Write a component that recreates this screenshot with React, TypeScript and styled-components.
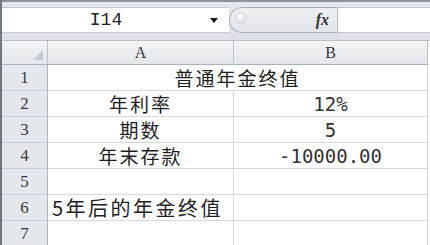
import React from "react";
import styled, { createGlobalStyle } from "styled-components";

const GlobalStyle = createGlobalStyle`
  html, body {
    margin: 0;
    padding: 0;
    background: #ffffff;
  }
`;

const Sheet = styled.div`
  width: 430px;
  height: 245px;
  overflow: hidden;
  background: #ffffff;
  border-left: 2px solid #6f7780;
  box-sizing: border-box;
`;

const FormulaBar = styled.div`
  height: 40px;
  box-sizing: border-box;
  border-top: 2px solid #8c9299;
  background: linear-gradient(#e4e7eb, #dde1e6);
  padding: 5px 0 7px 0;
  display: flex;
  align-items: stretch;
`;

const NameBox = styled.div`
  width: 227px;
  background: #ffffff;
  border-top: 1px solid #c3c8ce;
  border-bottom: 1px solid #c3c8ce;
  display: flex;
  align-items: center;
  font-family: "Liberation Mono", monospace;
  font-size: 18px;
  color: #222;
`;

const NameText = styled.span`
  flex: 1;
  text-align: center;
`;

const DropArrow = styled.span`
  width: 0;
  height: 0;
  margin-right: 11px;
  border-left: 4px solid transparent;
  border-right: 4px solid transparent;
  border-top: 5px solid #1a1a1a;
`;

const FxPill = styled.div`
  width: 109px;
  box-sizing: border-box;
  background: linear-gradient(#eef0f3, #e2e5e9);
  border: 1px solid #a9b0b8;
  border-right: 1px solid #b8bec5;
  border-radius: 13px 0 0 13px;
  display: flex;
  align-items: center;
  justify-content: space-between;
  padding: 0 8px 0 5px;
`;

const Knob = styled.span`
  width: 10px;
  height: 10px;
  border-radius: 50%;
  margin-top: -4px;
  background: radial-gradient(circle at 40% 35%, #ffffff, #c9ced4);
  border: 1px solid #d3d7dc;
`;

const Fx = styled.span`
  font-family: "Liberation Serif", serif;
  font-style: italic;
  font-weight: bold;
  font-size: 16px;
  color: #333;
`;

const FormulaInput = styled.div`
  flex: 1;
  background: #ffffff;
  border-top: 1px solid #c3c8ce;
  border-bottom: 1px solid #c3c8ce;
`;

const Grid = styled.div`
  display: grid;
  grid-template-columns: 46px 186px 194px 2px;
  grid-template-rows: 24px repeat(7, 26px);
  border-top: 1px solid #b9bfc6;
`;

const Corner = styled.div`
  position: relative;
  background: linear-gradient(#f2f4f6, #e3e7eb);
  border-right: 1px solid #bcc3ca;
  border-bottom: 1px solid #aab2bb;
  &::after {
    content: "";
    position: absolute;
    right: 4px;
    bottom: 4px;
    border-left: 10px solid transparent;
    border-bottom: 10px solid #c3c8ce;
  }
`;

const ColHead = styled.div`
  background: linear-gradient(#f3f5f7, #e2e6ea);
  border-right: 1px solid #bcc3ca;
  border-bottom: 1px solid #aab2bb;
  display: flex;
  align-items: center;
  justify-content: center;
  font-family: "Liberation Serif", serif;
  font-size: 16px;
  color: #333;
`;

const RowHead = styled.div`
  background: #e4e8ed;
  border-right: 1px solid #aab2bb;
  border-bottom: 1px solid #c6ccd3;
  display: flex;
  align-items: center;
  justify-content: center;
  font-family: "Liberation Serif", serif;
  font-size: 17px;
  color: #3a3a3a;
`;

const Cell = styled.div<{
  $align?: "left" | "center";
  $span?: number;
  $num?: boolean;
  $size?: number;
  $spacing?: number;
}>`
  grid-column: span ${({ $span }) => $span ?? 1};
  border-right: 1px solid #d6d8da;
  border-bottom: 1px solid #d6d8da;
  display: flex;
  align-items: center;
  justify-content: ${({ $align }) => ($align === "left" ? "flex-start" : "center")};
  padding: 0 ${({ $align }) => ($align === "left" ? "4px" : "0")};
  white-space: nowrap;
  font-family: ${({ $num }) =>
    $num ? '"DejaVu Sans Mono", monospace' : '"Noto Sans CJK SC", sans-serif'};
  font-size: ${({ $size }) => $size ?? 19}px;
  letter-spacing: ${({ $num, $spacing }) => ($num ? 0 : $spacing ?? 2)}px;
  color: ${({ $num }) => ($num ? "#333" : "#1e1e1e")};
  position: relative;
  z-index: ${({ $align }) => ($align === "left" ? 1 : 0)};
`;

const Edge = styled.div`
  background: #ffffff;
`;

type Row = { a?: string; b?: string; merged?: boolean; left?: boolean };

const rows: Row[] = [
  { a: "普通年金终值", merged: true },
  { a: "年利率", b: "12%" },
  { a: "期数", b: "5" },
  { a: "年末存款", b: "-10000.00" },
  {},
  { a: "5年后的年金终值", left: true },
  {},
];

const App: React.FC = () => {
  return (
    <>
      <GlobalStyle />
      <Sheet>
        <FormulaBar>
          <NameBox>
            <NameText>I14</NameText>
            <DropArrow />
          </NameBox>
          <FxPill>
            <Knob />
            <Fx>fx</Fx>
          </FxPill>
          <FormulaInput />
        </FormulaBar>
        <Grid>
          <Corner />
          <ColHead>A</ColHead>
          <ColHead>B</ColHead>
          <Edge />
          {rows.map((r, i) => (
            <React.Fragment key={i}>
              <RowHead>{i + 1}</RowHead>
              {r.merged ? (
                <Cell $span={2}>{r.a}</Cell>
              ) : (
                <>
                  <Cell
                    $align={r.left ? "left" : "center"}
                    $size={r.left ? 20 : 19}
                    $spacing={r.left ? 2.5 : 2}
                  >
                    {r.a}
                  </Cell>
                  <Cell $num>{r.b}</Cell>
                </>
              )}
              <Edge />
            </React.Fragment>
          ))}
        </Grid>
      </Sheet>
    </>
  );
};

export default App;
